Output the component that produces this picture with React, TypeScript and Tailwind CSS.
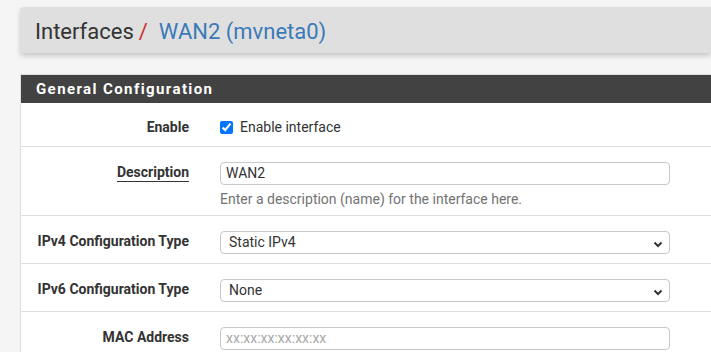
import React from "react";

const font = { fontFamily: "Roboto, 'Liberation Sans', sans-serif" };

function Chevron() {
  return (
    <svg width="10" height="7" viewBox="0 0 10 7" className="absolute right-[6px] top-[9px]">
      <path d="M1.5 1.5 L5 5 L8.5 1.5" fill="none" stroke="#333" strokeWidth="2" />
    </svg>
  );
}

function Row({
  label,
  underline,
  children,
}: {
  label: string;
  underline?: boolean;
  children: React.ReactNode;
}) {
  return (
    <div className="flex border-t border-[#dedede] pt-[15px] pb-[9px]">
      <div className="w-[183px] pr-[15px] text-right text-[14px] leading-[20px]">
        <span
          className={`font-bold text-[#333] ${
            underline ? "underline underline-offset-[4px]" : ""
          }`}
        >
          {label}
        </span>
      </div>
      <div className="flex-1 pl-[16px] pr-[41px] text-[14px] leading-[20px]">{children}</div>
    </div>
  );
}

function Select({ value }: { value: string }) {
  return (
    <div className="relative h-[23px] rounded-[4px] border border-[#c8c8c8] bg-white pl-[8px] text-[14px] leading-[21px] text-[#333]">
      {value}
      <Chevron />
    </div>
  );
}

export default function App() {
  return (
    <div className="min-h-screen bg-[#f5f5f5] pl-[20px] pt-[7px]" style={font}>
      <div className="flex h-[46px] items-center rounded-l-[4px] bg-[#dfdfdf] pl-[15px] pt-[2px] shadow-[0_3px_5px_rgba(0,0,0,0.18)] text-[22px]">
        <span className="text-[#333]">Interfaces</span>
        <span className="ml-[5px] text-[#c9302c]">/</span>
        <span className="ml-[11px] text-[#3a7ab8]">WAN2 (mvneta0)</span>
      </div>

      <div className="mt-[21px] border-l border-t border-[#dedede] bg-white">
        <div className="flex h-[28px] items-center bg-[#424242] pl-[15px] text-[15px] font-bold tracking-[1.4px] text-white">
          General Configuration
        </div>

        <div className="flex pt-[14px] pb-[9px]">
          <div className="w-[183px] pr-[15px] text-right text-[14px] leading-[20px]">
            <span className="font-bold text-[#333]">Enable</span>
          </div>
          <div className="flex flex-1 items-center pl-[16px] pr-[41px] text-[14px] leading-[20px]">
            <input
              type="checkbox"
              defaultChecked
              className="m-0 h-[13px] w-[13px] accent-[#0075ff]"
            />
            <span className="ml-[7px] text-[#333]">Enable interface</span>
          </div>
        </div>

        <Row label="Description" underline>
          <div className="h-[23px] rounded-[4px] border border-[#c8c8c8] bg-white pl-[5px] text-[14px] leading-[21px] text-[#333]">
            WAN2
          </div>
          <div className="mt-[7px] text-[14px] leading-[14px] text-[#737373]">
            Enter a description (name) for the interface here.
          </div>
        </Row>

        <Row label="IPv4 Configuration Type">
          <Select value="Static IPv4" />
        </Row>

        <Row label="IPv6 Configuration Type">
          <Select value="None" />
        </Row>

        <Row label="MAC Address">
          <div className="h-[23px] rounded-[4px] border border-[#c8c8c8] bg-white pl-[5px] text-[14px] leading-[21px] text-[#a8a8a8]">
            xx:xx:xx:xx:xx:xx
          </div>
        </Row>
      </div>
    </div>
  );
}
